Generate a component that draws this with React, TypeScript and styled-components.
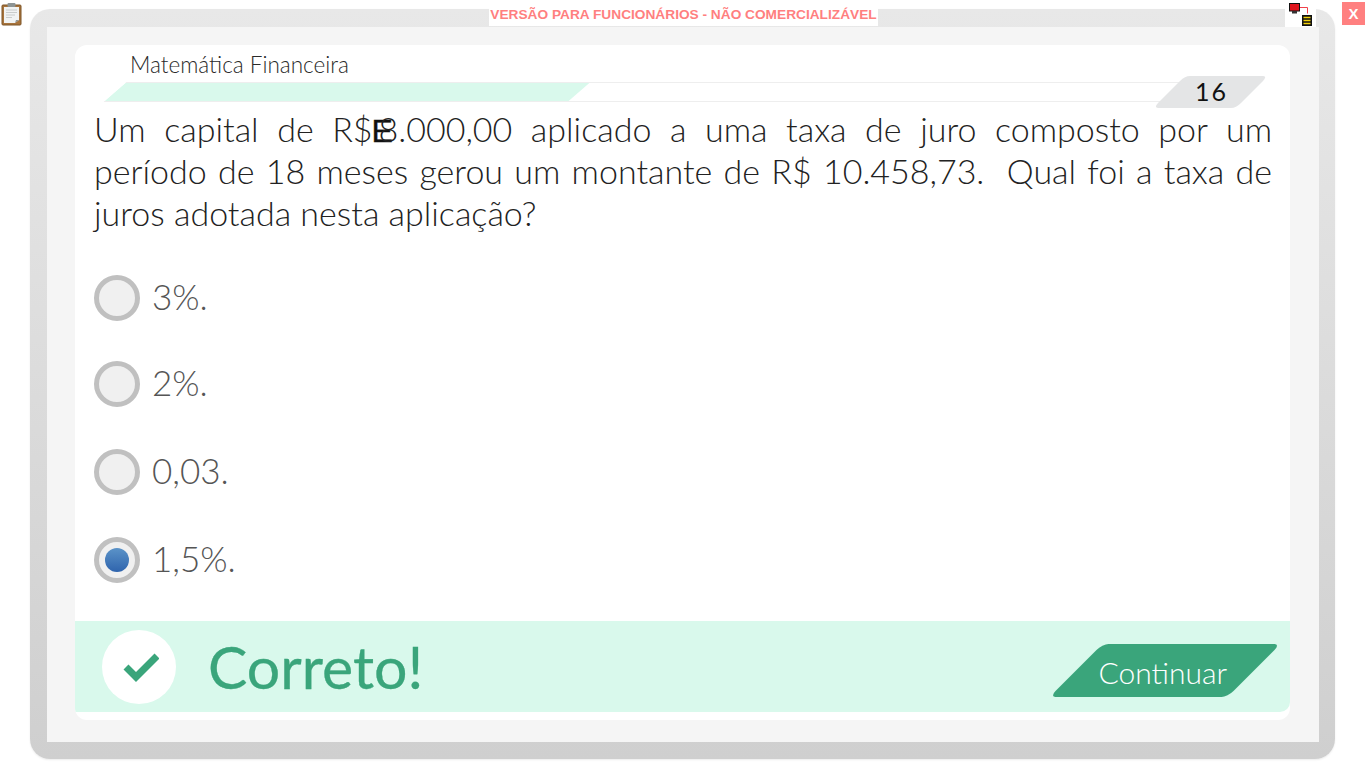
import React from "react";
import styled, { createGlobalStyle } from "styled-components";

const GlobalStyle = createGlobalStyle`
  html, body {
    margin: 0;
    padding: 0;
    background: #ffffff;
    overflow: hidden;
  }
  body {
    font-family: "Lato", "Liberation Sans", sans-serif;
  }
`;

const options = [
  { label: "3%.", height: 87, selected: false },
  { label: "2%.", height: 86, selected: false },
  { label: "0,03.", height: 89, selected: false },
  { label: "1,5%.", height: 87, selected: true },
];

const App = () => {
  return (
    <Page>
      <GlobalStyle />
      <Clipboard viewBox="0 0 22 24" aria-hidden="true">
        <rect x="1" y="3" width="19" height="20" rx="1" fill="#a8743c" stroke="#7d5426" />
        <path d="M3 5h15v13l-4 3H3z" fill="#f1f3f3" />
        <path d="M14 21l4-3h-3z" fill="#8f9494" />
        <rect x="6.500" y="1" width="8" height="4" rx="1" fill="#8d9494" />
        <path d="M5 8h11M5 10.500h11M5 13h9M5 15.500h6" stroke="#c9cccc" strokeWidth="1" />
      </Clipboard>
      <Watermark>VERSÃO PARA FUNCIONÁRIOS - NÃO COMERCIALIZÁVEL</Watermark>
      <NetworkBadge>
        <svg width="31" height="27" viewBox="0 0 31 27" aria-hidden="true">
          <rect x="4.500" y="3.500" width="10" height="7.500" fill="#e0141c" stroke="#111" />
          <rect x="7" y="11" width="5" height="2.500" fill="#333" />
          <path d="M15 7.500h7.500v6" fill="none" stroke="#f0404a" strokeWidth="1" />
          <rect x="17" y="15" width="10" height="11" fill="#111" />
          <path d="M18.500 17.500h7M18.500 20.500h7M18.500 23.500h7" stroke="#f2d00a" strokeWidth="1.600" />
        </svg>
      </NetworkBadge>
      <CloseButton>X</CloseButton>

      <Frame>
        <Inner>
          <Card>
            <Title>Matemática Financeira</Title>
            <ProgressRow>
              <Track>
                <Fill />
              </Track>
              <Counter>
                <span>16</span>
              </Counter>
            </ProgressRow>

            <Question>
              Um capital de R$
              <Glitch>E</Glitch>8.000,00 aplicado a uma taxa de juro composto por um
              período de 18 meses gerou um montante de R$ 10.458,73.&nbsp; Qual foi a
              taxa de juros adotada nesta aplicação?
            </Question>

            <Options>
              {options.map((option) => (
                <Option key={option.label} $height={option.height}>
                  <Radio>{option.selected && <Dot />}</Radio>
                  <OptionLabel>{option.label}</OptionLabel>
                </Option>
              ))}
            </Options>

            <Feedback>
              <CheckCircle>
                <svg width="40" height="30" viewBox="0 0 40 30" aria-hidden="true">
                  <path d="M7 15l10 10L38 4" fill="none" stroke="#3aa57b" strokeWidth="7" />
                </svg>
              </CheckCircle>
              <Result>Correto!</Result>
              <ContinueButton>
                <span>Continuar</span>
              </ContinueButton>
            </Feedback>
          </Card>
        </Inner>
      </Frame>
    </Page>
  );
};

const Page = styled.div`
  position: relative;
  width: 1366px;
  height: 768px;
  padding: 9px 31px 9px 30px;
  box-sizing: border-box;
`;

const Clipboard = styled.svg`
  position: absolute;
  top: 2px;
  left: 1px;
  width: 22px;
  height: 24px;
`;

const Watermark = styled.div`
  position: absolute;
  top: 7px;
  left: 489px;
  width: 389px;
  height: 19px;
  background: #ffffff;
  color: #ff7f7f;
  font-family: "Liberation Sans", sans-serif;
  font-size: 13.7px;
  font-weight: 700;
  line-height: 15px;
  text-align: center;
  white-space: nowrap;
  z-index: 2;
`;

const NetworkBadge = styled.div`
  position: absolute;
  top: 0;
  left: 1285px;
  width: 31px;
  height: 27px;
  background: #ffffff;
  z-index: 2;
`;

const CloseButton = styled.div`
  position: absolute;
  top: 2px;
  left: 1342px;
  width: 23px;
  height: 23px;
  background: #ff8080;
  color: #ffffff;
  font-family: "Liberation Sans", sans-serif;
  font-size: 15px;
  font-weight: 700;
  line-height: 23px;
  text-align: center;
`;

const Frame = styled.div`
  height: 100%;
  padding: 18px 16px 17px 17px;
  box-sizing: border-box;
  border-radius: 20px;
  background: linear-gradient(#e8e8e8, #cfcfcf);
  box-shadow: 0 1px 2px rgba(0, 0, 0, 0.08);
`;

const Inner = styled.div`
  height: 100%;
  padding: 18px 29px 22px 28px;
  box-sizing: border-box;
  background: #f5f5f5;
`;

const Card = styled.div`
  display: flex;
  flex-direction: column;
  height: 100%;
  padding-bottom: 8px;
  box-sizing: border-box;
  border-radius: 12px;
  background: #ffffff;
  overflow: hidden;
`;

const Title = styled.div`
  height: 37px;
  padding-left: 55px;
  color: #2a2a2a;
  font-size: 22.5px;
  font-weight: 300;
  line-height: 39px;
`;

const ProgressRow = styled.div`
  display: flex;
  align-items: center;
  height: 19px;
  padding-left: 40px;
`;

const Track = styled.div`
  width: 1064px;
  height: 20px;
  box-sizing: border-box;
  border: 1px solid #eeeeee;
  border-left: none;
  transform: skewX(-49deg);
  overflow: hidden;
`;

const Fill = styled.div`
  width: 464px;
  height: 100%;
  background: #d9f9ec;
`;

const Counter = styled.div`
  flex: none;
  display: flex;
  align-items: center;
  justify-content: center;
  width: 83px;
  height: 32px;
  margin-left: -10px;
  padding-bottom: 3px;
  box-sizing: border-box;
  border-radius: 5px;
  background: #e4e5e6;
  transform: skewX(-45deg);
  color: #111111;
  font-size: 25px;
  font-weight: 400;
  letter-spacing: 2px;
  z-index: 1;

  span {
    display: block;
    transform: skewX(45deg);
  }
`;

const Question = styled.p`
  margin: 7px 18px 0 19px;
  color: #222222;
  font-size: 34px;
  font-weight: 300;
  line-height: 42px;
  text-align: justify;
`;

const Glitch = styled.span`
  display: inline-block;
  width: 7px;
  margin-left: -1px;
  color: #111111;
  font-family: "Liberation Sans", sans-serif;
  font-size: 32px;
  font-weight: 400;
  line-height: 1;
  -webkit-text-stroke: 0.4px #111111;
`;

const Options = styled.div`
  display: flex;
  flex-direction: column;
  margin-top: 20px;
  padding-left: 19px;
`;

const Option = styled.div<{ $height: number }>`
  display: flex;
  align-items: center;
  gap: 12px;
  height: ${(props) => props.$height}px;
`;

const Radio = styled.div`
  display: flex;
  align-items: center;
  justify-content: center;
  width: 46px;
  height: 46px;
  box-sizing: border-box;
  border: 5px solid #c0c0c0;
  border-radius: 50%;
  background: #f0f0f0;
`;

const Dot = styled.div`
  width: 24px;
  height: 24px;
  border-radius: 50%;
  background: linear-gradient(#5b93c8, #2f64ad);
`;

const OptionLabel = styled.span`
  padding-bottom: 4px;
  color: #555555;
  font-size: 35px;
  font-weight: 300;
`;

const Feedback = styled.div`
  display: flex;
  align-items: center;
  flex: none;
  height: 91px;
  margin-top: auto;
  padding: 0 12px 0 27px;
  background: #d9f9ec;
  border-radius: 0 0 10px 0;
`;

const CheckCircle = styled.div`
  display: flex;
  align-items: center;
  justify-content: center;
  width: 74px;
  height: 74px;
  border-radius: 50%;
  background: #ffffff;
`;

const Result = styled.div`
  margin-left: 32px;
  color: #3aa57b;
  font-size: 59px;
  font-weight: 400;
  -webkit-text-stroke: 0.3px #3aa57b;
`;

const ContinueButton = styled.div`
  display: flex;
  align-items: center;
  justify-content: center;
  width: 178px;
  height: 53px;
  margin: 8px 24px 0 auto;
  border-radius: 6px;
  background: #3aa57b;
  transform: skewX(-45deg);
  color: #ffffff;
  font-size: 30px;
  font-weight: 300;

  span {
    display: block;
    padding: 2px 4px 0 0;
    transform: skewX(45deg);
  }
`;

export default App;
